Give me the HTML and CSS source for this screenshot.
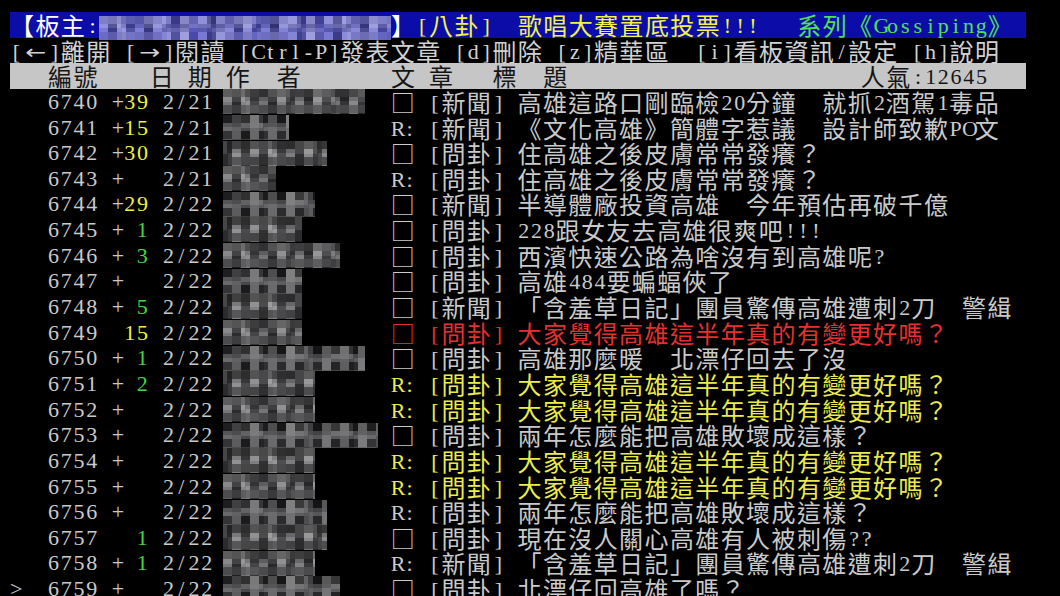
FILE: index.html
```html
<!DOCTYPE html>
<html lang="zh-Hant">
<head>
<meta charset="utf-8">
<title>Gossiping</title>
<link rel="stylesheet" href="styles.css">
</head>
<body>
<div class="term">
<div class="row flow hd"><span class="wh">【板主<i>:</i></span><span class="mblur"></span><span class="wh">】</span><span class="yl"><i>[</i>八卦<i>]</i>　歌唱大賽置底投票<i>!</i><i>!</i><i>!</i></span>　<i> </i><span class="gr">系列《<i>G</i><i>o</i><i>s</i><i>s</i><i>i</i><i>p</i><i>i</i><i>n</i><i>g</i>》</span></div>
<div class="row flow menu"><i>[</i><i class="w">←</i><i>]</i>離開<i> </i><i>[</i><i class="w">→</i><i>]</i>閱讀<i> </i><i>[</i><i>C</i><i>t</i><i>r</i><i>l</i><i>-</i><i>P</i><i>]</i>發表文章<i> </i><i>[</i><i>d</i><i>]</i>刪除<i> </i><i>[</i><i>z</i><i>]</i>精華區　<i>[</i><i>i</i><i>]</i>看板資訊<i>/</i>設定<i> </i><i>[</i><i>h</i><i>]</i>說明</div>
<div class="row flow cols"><i> </i><i> </i><i> </i>編號　　日<i> </i>期<i> </i>作　者　　　<i> </i>文<i> </i>章<i> </i>　標　題　　　　　　　　　　　<i> </i>人氣<i>:</i><i>1</i><i>2</i><i>6</i><i>4</i><i>5</i></div>

<div class="row li"><span class="num lat">6740</span><span class="mk lat">+</span><span class="cnt lat y">39</span><span class="dt lat"><i>2</i><i>/</i><i>2</i><i>1</i></span><span class="au s11"></span><span class="ty">□</span><span class="cat"><i>[</i>新聞<i>]</i></span><span class="ti">高雄這路口剛臨檢<i>2</i><i>0</i>分鐘　就抓<i>2</i>酒駕<i>1</i>毒品</span></div>
<div class="row li"><span class="num lat">6741</span><span class="mk lat">+</span><span class="cnt lat y">15</span><span class="dt lat"><i>2</i><i>/</i><i>2</i><i>1</i></span><span class="au s5 v2"></span><span class="ty"><i>R</i><i>:</i></span><span class="cat"><i>[</i>新聞<i>]</i></span><span class="ti">《文化高雄》簡體字惹議　設計師致歉<i>P</i><i>O</i>文</span></div>
<div class="row li"><span class="num lat">6742</span><span class="mk lat">+</span><span class="cnt lat y">30</span><span class="dt lat"><i>2</i><i>/</i><i>2</i><i>1</i></span><span class="au s8 v3"></span><span class="ty">□</span><span class="cat"><i>[</i>問卦<i>]</i></span><span class="ti">住高雄之後皮膚常常發癢？</span></div>
<div class="row li"><span class="num lat">6743</span><span class="mk lat">+</span><span class="dt lat"><i>2</i><i>/</i><i>2</i><i>1</i></span><span class="au s4"></span><span class="ty"><i>R</i><i>:</i></span><span class="cat"><i>[</i>問卦<i>]</i></span><span class="ti">住高雄之後皮膚常常發癢？</span></div>
<div class="row li"><span class="num lat">6744</span><span class="mk lat">+</span><span class="cnt lat y">29</span><span class="dt lat"><i>2</i><i>/</i><i>2</i><i>2</i></span><span class="au s7 v2"></span><span class="ty">□</span><span class="cat"><i>[</i>新聞<i>]</i></span><span class="ti">半導體廠投資高雄　今年預估再破千億</span></div>
<div class="row li"><span class="num lat">6745</span><span class="mk lat">+</span><span class="cnt lat g">1</span><span class="dt lat"><i>2</i><i>/</i><i>2</i><i>2</i></span><span class="au s6 v3"></span><span class="ty">□</span><span class="cat"><i>[</i>問卦<i>]</i></span><span class="ti"><i>2</i><i>2</i><i>8</i>跟女友去高雄很爽吧<i>!</i><i>!</i><i>!</i></span></div>
<div class="row li"><span class="num lat">6746</span><span class="mk lat">+</span><span class="cnt lat g">3</span><span class="dt lat"><i>2</i><i>/</i><i>2</i><i>2</i></span><span class="au s9"></span><span class="ty">□</span><span class="cat"><i>[</i>問卦<i>]</i></span><span class="ti">西濱快速公路為啥沒有到高雄呢<i>?</i></span></div>
<div class="row li"><span class="num lat">6747</span><span class="mk lat">+</span><span class="dt lat"><i>2</i><i>/</i><i>2</i><i>2</i></span><span class="au s6 v2"></span><span class="ty">□</span><span class="cat"><i>[</i>問卦<i>]</i></span><span class="ti">高雄<i>4</i><i>8</i><i>4</i>要蝙蝠俠了</span></div>
<div class="row li"><span class="num lat">6748</span><span class="mk lat">+</span><span class="cnt lat g">5</span><span class="dt lat"><i>2</i><i>/</i><i>2</i><i>2</i></span><span class="au s6 v3"></span><span class="ty">□</span><span class="cat"><i>[</i>新聞<i>]</i></span><span class="ti">「含羞草日記」團員驚傳高雄遭刺<i>2</i>刀　警緝</span></div>
<div class="row li"><span class="num lat">6749</span><span class="cnt lat y">15</span><span class="dt lat"><i>2</i><i>/</i><i>2</i><i>2</i></span><span class="au s6"></span><span class="ty rd">□</span><span class="cat rd"><i>[</i>問卦<i>]</i></span><span class="ti rd">大家覺得高雄這半年真的有變更好嗎？</span></div>
<div class="row li"><span class="num lat">6750</span><span class="mk lat">+</span><span class="cnt lat g">1</span><span class="dt lat"><i>2</i><i>/</i><i>2</i><i>2</i></span><span class="au s11 v2"></span><span class="ty">□</span><span class="cat"><i>[</i>問卦<i>]</i></span><span class="ti">高雄那麼暖　北漂仔回去了沒</span></div>
<div class="row li"><span class="num lat">6751</span><span class="mk lat">+</span><span class="cnt lat g">2</span><span class="dt lat"><i>2</i><i>/</i><i>2</i><i>2</i></span><span class="au s7 v3"></span><span class="ty yt"><i>R</i><i>:</i></span><span class="cat yt"><i>[</i>問卦<i>]</i></span><span class="ti yt">大家覺得高雄這半年真的有變更好嗎？</span></div>
<div class="row li"><span class="num lat">6752</span><span class="mk lat">+</span><span class="dt lat"><i>2</i><i>/</i><i>2</i><i>2</i></span><span class="au s7"></span><span class="ty yt"><i>R</i><i>:</i></span><span class="cat yt"><i>[</i>問卦<i>]</i></span><span class="ti yt">大家覺得高雄這半年真的有變更好嗎？</span></div>
<div class="row li"><span class="num lat">6753</span><span class="mk lat">+</span><span class="dt lat"><i>2</i><i>/</i><i>2</i><i>2</i></span><span class="au s12 v2"></span><span class="ty">□</span><span class="cat"><i>[</i>問卦<i>]</i></span><span class="ti">兩年怎麼能把高雄敗壞成這樣？</span></div>
<div class="row li"><span class="num lat">6754</span><span class="mk lat">+</span><span class="dt lat"><i>2</i><i>/</i><i>2</i><i>2</i></span><span class="au s7 v3"></span><span class="ty yt"><i>R</i><i>:</i></span><span class="cat yt"><i>[</i>問卦<i>]</i></span><span class="ti yt">大家覺得高雄這半年真的有變更好嗎？</span></div>
<div class="row li"><span class="num lat">6755</span><span class="mk lat">+</span><span class="dt lat"><i>2</i><i>/</i><i>2</i><i>2</i></span><span class="au s7"></span><span class="ty yt"><i>R</i><i>:</i></span><span class="cat yt"><i>[</i>問卦<i>]</i></span><span class="ti yt">大家覺得高雄這半年真的有變更好嗎？</span></div>
<div class="row li"><span class="num lat">6756</span><span class="mk lat">+</span><span class="dt lat"><i>2</i><i>/</i><i>2</i><i>2</i></span><span class="au s8 v2"></span><span class="ty"><i>R</i><i>:</i></span><span class="cat"><i>[</i>問卦<i>]</i></span><span class="ti">兩年怎麼能把高雄敗壞成這樣？</span></div>
<div class="row li"><span class="num lat">6757</span><span class="cnt lat g">1</span><span class="dt lat"><i>2</i><i>/</i><i>2</i><i>2</i></span><span class="au s8 v3"></span><span class="ty">□</span><span class="cat"><i>[</i>問卦<i>]</i></span><span class="ti">現在沒人關心高雄有人被刺傷<i>?</i><i>?</i></span></div>
<div class="row li"><span class="num lat">6758</span><span class="mk lat">+</span><span class="cnt lat g">1</span><span class="dt lat"><i>2</i><i>/</i><i>2</i><i>2</i></span><span class="au s7"></span><span class="ty"><i>R</i><i>:</i></span><span class="cat"><i>[</i>新聞<i>]</i></span><span class="ti">「含羞草日記」團員驚傳高雄遭刺<i>2</i>刀　警緝</span></div>
<div class="row li"><span class="cur lat">&gt;</span><span class="num lat">6759</span><span class="mk lat">+</span><span class="dt lat"><i>2</i><i>/</i><i>2</i><i>2</i></span><span class="au s9 v2"></span><span class="ty">□</span><span class="cat"><i>[</i>問卦<i>]</i></span><span class="ti">北漂仔回高雄了嗎？</span></div>
</div>
</body>
</html>
```

FILE: styles.css
```css
* { box-sizing: border-box; }
html, body { margin: 0; background: #000; }
body {
  width: 1060px;
  height: 596px;
  overflow: hidden;
  padding: 12px 0 0 10px;
  font-family: "Noto Sans CJK TC", "Noto Sans CJK JP", sans-serif;
  font-size: 24px;
  letter-spacing: 1.4px;
  color: #cacaca;
  line-height: 25.65px;
  text-spacing-trim: space-all;
}
.term { width: 1016px; }
.row { height: 25.65px; line-height: 25.65px; white-space: pre; }
.flow { display: block; }
.li {
  display: grid;
  grid-template-columns: repeat(80, 12.7px);
  align-items: center;
}
i {
  font-style: normal;
  display: inline-block;
  width: 12.7px;
  line-height: 20px;
  text-align: center;
  font-family: "Liberation Serif", serif;
  font-size: 22px;
  letter-spacing: 0;
  vertical-align: 2px;
}
i.w {
  width: 25.4px;
  font-family: "DejaVu Sans", sans-serif;
  font-size: 20px;
  transform: scaleX(1.25);
}
.lat {
  font-family: "Liberation Serif", serif;
  font-size: 22px;
  letter-spacing: 1.7px;
}
.lat i { vertical-align: 0; }

/* header bar */
.hd { background: #0c0ca8; color: #fff; }
.yl { color: #f2f24a; }
.gr { color: #52e052; }
.mblur {
  display: inline-block;
  width: 292px;
  height: 24px;
  vertical-align: -5px;
  background-color: #5656c8;
  background-image:
    conic-gradient(rgba(255,255,255,.12) 25%, rgba(0,0,0,.14) 0 50%, rgba(255,255,255,.05) 0 75%, rgba(0,0,0,.08) 0),
    conic-gradient(rgba(0,0,0,.1) 25%, rgba(255,255,255,.1) 0 50%, rgba(0,0,0,0) 0 75%, rgba(255,255,255,.16) 0),
    linear-gradient(90deg, rgba(255,255,255,.18) 0 9px, rgba(0,0,0,.2) 9px 18px, rgba(255,255,255,.28) 18px 27px, rgba(0,0,0,.08) 27px 36px, rgba(255,255,255,.1) 36px 45px, rgba(0,0,0,.25) 45px 54px, rgba(255,255,255,.22) 54px 63px);
  background-size: 18px 16px, 45px 24px, 63px 24px;
}

/* menu + column header */
.menu { color: #d2d2d2; }
.cols { background: #c6c6c6; color: #151515; width: 1016px; }

/* list columns */
.cur { grid-column: 1 / 3; }
.num { grid-column: 4 / 8; }
.mk { grid-column: 9 / 10; letter-spacing: 0; text-align: center; }
.cnt { grid-column: 10 / 12; text-align: right; }
.dt { grid-column: 13 / 17; }
.ty { grid-column: 31 / 34; }
.cat { grid-column: 34 / 40; }
.ti { grid-column: 41 / 81; }

.au {
  grid-column-start: 18;
  height: 25px;
  margin-left: -3px;
  background-color: #4a4a4e;
  background-image:
    conic-gradient(rgba(255,255,255,.1) 25%, rgba(0,0,0,.22) 0 50%, rgba(255,255,255,.04) 0 75%, rgba(0,0,0,.12) 0),
    conic-gradient(rgba(0,0,0,.12) 25%, rgba(255,255,255,.08) 0 50%, rgba(0,0,0,0) 0 75%, rgba(255,255,255,.14) 0),
    linear-gradient(90deg, rgba(255,255,255,.14) 0 9px, rgba(0,0,0,.35) 9px 18px, rgba(255,255,255,.24) 18px 27px, rgba(0,0,0,.15) 27px 36px, rgba(255,255,255,.06) 36px 45px, rgba(0,0,0,.42) 45px 54px, rgba(255,255,255,.2) 54px 63px, rgba(0,0,0,.22) 63px 72px),
    linear-gradient(180deg, rgba(0,0,0,.3) 0 8px, rgba(255,255,255,.08) 8px 16px, rgba(0,0,0,.2) 16px 25px);
  background-size: 18px 16px, 45px 25px, 72px 25px, 100% 25px;
}
.v2 { background-position: 9px 8px, 18px 0, -27px 0, 0 0; }
.v3 { background-position: 0 8px, 27px 0, -45px 0, 0 0; }
.s4 { grid-column-end: span 4; }
.s5 { grid-column-end: span 5; }
.s6 { grid-column-end: span 6; }
.s7 { grid-column-end: span 7; }
.s8 { grid-column-end: span 8; }
.s9 { grid-column-end: span 9; }
.s11 { grid-column-end: span 11; }
.s12 { grid-column-end: span 12; }

/* colours */
.y { color: #f0f040; }
.g { color: #42d842; }
.rd { color: #e63030; }
.yt { color: #ecec4c; }
```
